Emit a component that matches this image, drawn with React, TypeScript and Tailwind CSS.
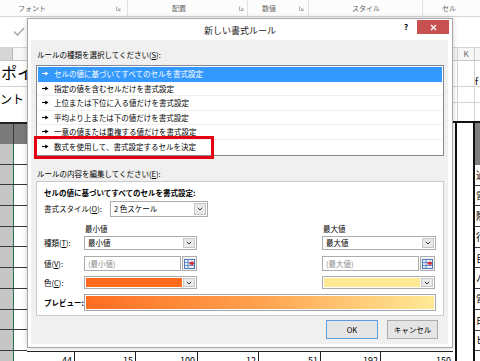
import React from 'react'

const jp = "font-['Noto_Sans_CJK_JP','Noto_Sans',sans-serif]"

const rules = [
  'セルの値に基づいてすべてのセルを書式設定',
  '指定の値を含むセルだけを書式設定',
  '上位または下位に入る値だけを書式設定',
  '平均より上または下の値だけを書式設定',
  '一意の値または重複する値だけを書式設定',
  '数式を使用して、書式設定するセルを決定',
]

const rightChars = ['過', '電', '際', '行', '自', 'ハ', '電', '白', 'ビ']

const bottomNums = [
  { w: 'w-[47px]', v: '44' },
  { w: 'w-[61px]', v: '15' },
  { w: 'w-[62px]', v: '100' },
  { w: 'w-[61px]', v: '12' },
  { w: 'w-[62px]', v: '51' },
  { w: 'w-[60px]', v: '192' },
  { w: 'flex-1', v: '150' },
]

const Launcher = () => (
  <svg width="5" height="5" viewBox="0 0 5 5" className="shrink-0">
    <path d="M0.5 0.5v4h4" fill="none" stroke="#a0a0a0" strokeWidth="0.8" />
    <path d="M1.6 1.6l2.4 2.4M4 2.4v1.6H2.4" fill="none" stroke="#a0a0a0" strokeWidth="0.8" />
  </svg>
)

const Chevron = () => (
  <svg width="6" height="4" viewBox="0 0 6 4">
    <path d="M0.8 0.8L3 3l2.2-2.2" fill="none" stroke="#3a3a3a" strokeWidth="1" />
  </svg>
)

const Bullet = ({ white }: { white?: boolean }) => (
  <svg width="7" height="5" viewBox="0 0 7 5" className="shrink-0">
    <path d="M0 2.5h4" stroke={white ? '#fff' : '#000'} strokeWidth="1" />
    <path d="M3.2 0.6L6.6 2.5 3.2 4.4z" fill={white ? '#fff' : '#000'} />
  </svg>
)

const RangeIcon = () => (
  <svg width="11" height="10" viewBox="0 0 11 10">
    <rect x="0.5" y="0.5" width="10" height="9" fill="#e4eefa" stroke="#4f79b8" />
    <path d="M0.5 3.5h10M0.5 6.5h10M4 0.5v9" stroke="#4f79b8" strokeWidth="0.8" />
    <path d="M5.5 3.2h2.2v-1.4l2.6 2.6-2.6 2.6V5.6H5.5z" fill="#d8262b" />
  </svg>
)

const DropBtn = () => (
  <div className="m-[1px] flex w-[12px] shrink-0 items-center justify-center border border-[#c6c6c6] bg-[#e9e9e9]">
    <Chevron />
  </div>
)

const Select = ({ value, className }: { value: string; className: string }) => (
  <div className={`flex border border-[#acacac] bg-white ${className}`}>
    <div className="flex flex-1 items-center pl-[3px] text-[7.5px] leading-none">{value}</div>
    <DropBtn />
  </div>
)

const RangeInput = ({ value }: { value: string }) => (
  <div className="flex h-[15px] w-[113px]">
    <div className="flex flex-1 items-center border border-[#acacac] bg-white pl-[3px] text-[7.5px] leading-none text-[#8c8c8c]">
      {value}
    </div>
    <div className="ml-[1px] flex w-[15px] items-center justify-center border border-[#acacac] bg-[#f2f2f2]">
      <RangeIcon />
    </div>
  </div>
)

const ColorSelect = ({ swatch }: { swatch: string }) => (
  <div className="flex h-[13px] w-[113px] border border-[#acacac] bg-white p-[1px]">
    <div className={`flex-1 ${swatch}`} />
    <div className="ml-[1px] flex w-[12px] items-center justify-center border border-[#c6c6c6] bg-[#e9e9e9]">
      <Chevron />
    </div>
  </div>
)

const Label = ({ text, u, tail, className }: { text: string; u: string; tail?: string; className: string }) => (
  <div className={`flex items-center text-[7.5px] leading-none ${className}`}>
    <span>
      {text}(<u>{u}</u>):{tail}
    </span>
  </div>
)

function Dialog() {
  return (
    <div className="absolute left-[27px] top-[18px] flex h-[330px] w-[426px] flex-col border border-[#a9a9a9] bg-white shadow-[0_0_5px_rgba(0,0,0,0.2)]">
      {/* title bar */}
      <div className="grid h-[21px] grid-cols-[1fr_auto_1fr]">
        <div />
        <div className="flex items-center pt-[1px] text-[9px] leading-none text-[#222]">新しい書式ルール</div>
        <div className="flex items-start justify-end pr-[3px] pt-[1px]">
          <span className="mr-[9px] mt-[3px] text-[8px] font-bold leading-none">?</span>
          <div className="flex h-[14px] w-[32px] items-center justify-center bg-[#c75050]">
            <svg width="7" height="7" viewBox="0 0 7 7">
              <path d="M1 1l5 5M6 1L1 6" stroke="#fff" strokeWidth="1.3" />
            </svg>
          </div>
        </div>
      </div>

      {/* client area */}
      <div className="mb-[3px] ml-[3px] mr-[4px] flex flex-1 flex-col bg-[#f0f0f0]">
        <Label text="ルールの種類を選択してください" u="S" className="ml-[6px] mt-[11px] h-[8px]" />

        <div className="relative ml-[5px] mr-[4px] mt-[6px] border border-[#828790] bg-white p-[1px]">
          {rules.map((r, i) => (
            <div
              key={r}
              className={`flex h-[14.5px] items-center gap-[5px] border-b pl-[4px] text-[7.5px] leading-none ${
                i === 0 ? 'border-[#3399ff] bg-[#3399ff] text-white' : 'border-[#efefef] text-black'
              } ${i === 5 ? 'border-transparent' : ''}`}
            >
              <Bullet white={i === 0} />
              <span>{r}</span>
            </div>
          ))}
          <div className="absolute left-[-3px] top-[70px] h-[23px] w-[180px] border-[3px] border-[#e60012]" />
        </div>

        <Label text="ルールの内容を編集してください" u="E" className="ml-[6px] mt-[14px] h-[8px]" />

        <div className="ml-[5px] mr-[4px] mt-[3px] flex h-[135px] flex-col border border-[#c9c9c9] bg-white pb-[4px] pl-[7px] pr-[7px] pt-[7px]">
          <div className="flex h-[8px] items-center text-[7.5px] font-bold leading-none">
            セルの値に基づいてすべてのセルを書式設定:
          </div>

          <div className="mt-[4px] flex h-[16px]">
            <Label text="書式スタイル" u="O" className="w-[66px]" />
            <Select value="2 色スケール" className="w-[98px]" />
          </div>

          <div className="mt-[8px] flex h-[8px] text-[7.5px] leading-none">
            <span className="ml-[41px] w-[238px]">最小値</span>
            <span>最大値</span>
          </div>

          <div className="mt-[3px] flex h-[14px]">
            <Label text="種類" u="T" className="w-[40px]" />
            <Select value="最小値" className="w-[113px]" />
            <div className="w-[125px]" />
            <Select value="最大値" className="w-[114px]" />
          </div>

          <div className="mt-[6px] flex h-[15px]">
            <Label text="値" u="V" className="w-[40px]" />
            <RangeInput value="(最小値)" />
            <div className="w-[125px]" />
            <RangeInput value="(最大値)" />
          </div>

          <div className="mt-[5px] flex h-[13px]">
            <Label text="色" u="C" className="w-[40px]" />
            <ColorSelect swatch="bg-[#fd6a1e]" />
            <div className="w-[125px]" />
            <ColorSelect swatch="bg-[#ffe994]" />
          </div>

          <div className="mt-[5px] flex h-[17px]">
            <div className="flex w-[40px] items-center text-[7.5px] font-bold leading-none">プレビュー:</div>
            <div className="flex w-[352px] border border-[#a6a6a6] bg-white p-[1px]">
              <div className="flex-1 bg-linear-to-r from-[#fd6c20] via-[#ffa24e] to-[#ffe996]" />
            </div>
          </div>
        </div>

        <div className="mr-[10px] mt-[4px] flex h-[19px] justify-end gap-[9px] text-[7.5px] leading-none">
          <div className="flex w-[52px] items-center justify-center border border-[#5a9fe4] bg-[#e5e5e5]">OK</div>
          <div className="flex w-[51px] items-center justify-center border border-[#adadad] bg-[#e5e5e5]">キャンセル</div>
        </div>
      </div>
    </div>
  )
}

export default function App() {
  return (
    <div className={`relative flex h-[361px] w-[480px] flex-col overflow-hidden bg-white ${jp}`}>
      {/* ribbon group labels */}
      <div className="flex h-[17px] border-b border-[#d5d5d5] bg-[#fcfcfc] text-[7px] leading-none text-[#666]">
        <div className="flex w-[128px] items-center border-r border-[#e2e2e2] pl-[18px] pr-[6px]">
          <span className="flex-1">フォント</span>
          <Launcher />
        </div>
        <div className="flex w-[120px] items-center border-r border-[#e2e2e2] pl-[44px] pr-[3px]">
          <span className="flex-1">配置</span>
          <Launcher />
        </div>
        <div className="flex w-[61px] items-center border-r border-[#e2e2e2] pl-[14px] pr-[4px]">
          <span className="flex-1">数値</span>
          <Launcher />
        </div>
        <div className="flex w-[114px] items-center border-r border-[#e2e2e2] pl-[43px]">スタイル</div>
        <div className="flex flex-1 items-center pl-[19px]">セル</div>
      </div>

      {/* formula bar */}
      <div className="flex h-[31px] border-b border-[#d4d4d4] bg-white">
        <div className="pl-[13px] pt-[10px]">
          <svg width="12" height="9" viewBox="0 0 12 9">
            <path d="M1 4.5l3.5 3.5L11 1" fill="none" stroke="#a9a9a9" strokeWidth="1.6" />
          </svg>
        </div>
      </div>

      {/* column headers */}
      <div className="flex h-[13px] border-b border-[#c6c6c6] bg-[#f6f6f6]">
        <div className="w-[13px] border-r border-[#b5b5b5] bg-[#d6d6d6]" />
        <div className="flex-1" />
        <div className="flex w-[17px] items-center justify-center border-l border-[#d0d0d0] text-[8px] leading-none text-[#666]">
          K
        </div>
        <div className="w-[6px] border-l border-[#d0d0d0]" />
      </div>

      {/* sheet body */}
      <div className="flex flex-1">
        {/* left strip */}
        <div className="flex w-[27px] flex-col overflow-hidden">
          <div className="h-[26px] overflow-hidden whitespace-nowrap border-b border-[#d4d4d4] pl-[1px] pt-[3px] text-[16px] leading-none">
            ポイ
          </div>
          <div className="h-[35px] overflow-hidden whitespace-nowrap pl-[0px] pt-[6px] text-[12px] leading-none">
            ント
          </div>
          <div className="flex h-[22px] border-t-2 border-[#222]">
            <div className="w-[14px] border-r border-[#3a3a3a] bg-[#7b7b7b]" />
            <div className="flex-1 bg-[#7b7b7b]" />
          </div>
          {Array.from({ length: 11 }).map((_, i) => (
            <div key={i} className={`flex shrink-0 ${i < 10 ? 'h-[20.7px] border-b border-[#3a3a3a]' : 'flex-1'}`}>
              <div className="w-[13px] bg-[#c6c6c6]" />
              <div className="w-[1px] bg-[#217346]" />
              <div className="flex-1 bg-white" />
            </div>
          ))}
        </div>

        {/* middle (under the dialog) */}
        <div className="flex flex-1 flex-col">
          <div className="flex-1" />
          <div className="flex h-[10px] border-t border-[#222]">
            {bottomNums.map((c, i) => (
              <div
                key={i}
                className={`${c.w} overflow-hidden pr-[2px] pt-[4px] text-right text-[9px] leading-none ${i > 0 ? 'border-l border-[#222]' : ''}`}
              >
                {c.v}
              </div>
            ))}
          </div>
        </div>

        {/* right strip */}
        <div className="flex w-[27px] flex-col">
          <div className="flex h-[26px] border-b border-[#d4d4d4]">
            <div className="w-[4px]" />
            <div className="w-[17px] border-l border-[#d4d4d4]" />
            <div className="flex flex-1 items-end overflow-hidden border-l border-[#d4d4d4] text-[9px] leading-none">
              <span className="underline">f</span>
            </div>
          </div>
          <div className="flex h-[16px] border-b border-[#d4d4d4]">
            <div className="w-[4px]" />
            <div className="w-[17px] border-l border-[#d4d4d4]" />
            <div className="flex-1 border-l border-[#d4d4d4]" />
          </div>
          <div className="flex h-[20px] border-b-2 border-[#111]">
            <div className="w-[4px]" />
            <div className="w-[17px] border-l border-[#d4d4d4]" />
            <div className="flex-1 border-l border-[#d4d4d4]" />
          </div>
          <div className="flex flex-1">
            <div className="w-[2px]" />
            <div className="w-[2px] bg-[#111]" />
            <div className="w-[16px]" />
            <div className="w-[2px] bg-[#111]" />
            <div className="flex flex-1 flex-col overflow-hidden">
              <div className="h-[42px] shrink-0 bg-[#7f7f7f]" />
              {rightChars.map((ch, i) => (
                <div
                  key={i}
                  className="flex h-[20.7px] shrink-0 items-center whitespace-nowrap border-b border-[#3a3a3a] pl-[1px] text-[10px] leading-none"
                >
                  {ch}
                </div>
              ))}
              <div className="flex-1" />
            </div>
          </div>
        </div>
      </div>

      <Dialog />
    </div>
  )
}
